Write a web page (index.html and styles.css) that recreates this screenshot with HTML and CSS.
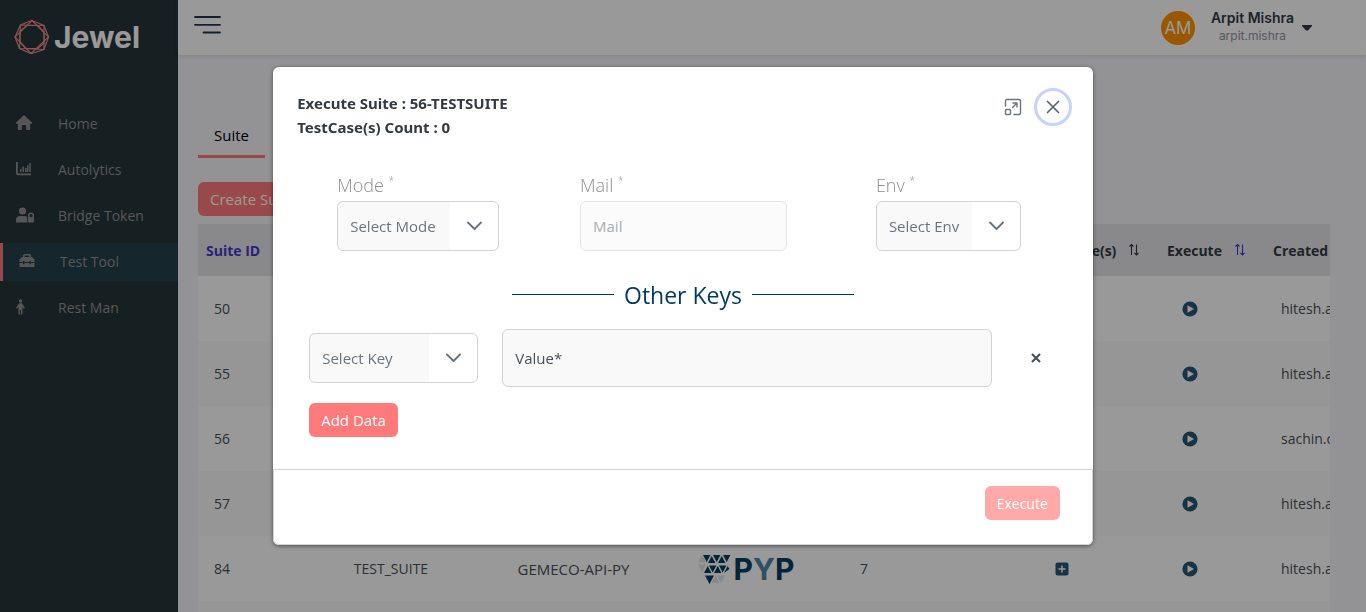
FILE: index.html
```html
<!DOCTYPE html>
<html lang="en">
<head>
<meta charset="utf-8">
<meta name="viewport" content="width=device-width, initial-scale=1">
<title>Jewel - Test Tool</title>
<link rel="stylesheet" href="styles.css">
</head>
<body>
<svg class="defs" aria-hidden="true">
  <symbol id="play" viewBox="0 0 16 16"><circle cx="8" cy="8" r="7.6" fill="#285676"/><path d="M5.500 4.200v7.600L12 8z" fill="#fff"/></symbol>
  <symbol id="chevron" viewBox="0 0 16 16"><path d="M1 4.500 7.500 11l6.500-6.500" fill="none" stroke="#667080" stroke-width="1.800" stroke-linecap="round" stroke-linejoin="round"/></symbol>
  <symbol id="sort" viewBox="0 0 12 14"><path d="M3.500 12V1.500M1.500 3.500l2-2 2 2M8.500 1.500V12M6.500 10l2 2 2-2" fill="none" stroke="currentColor" stroke-width="1.100"/></symbol>
</svg>
<div class="app">
  <aside class="sidebar">
    <a class="brand" href="#">
      <svg class="gem" viewBox="0 0 36 36" fill="none" stroke="#e88b8b" stroke-width="1.200"><path d="M18 1.500 30 6.500 34.500 18 30 30.500 17 34.500 5.500 29.500 1 18 6.500 6z"/><path d="M18 1.500 34.500 18 17 34.500 1 18z"/><path d="M30 6.500V30.500L5.500 29.500 6.500 6z"/><path d="M13 6.500H24L30 13V24L24 29.500H12L6 23V12z"/></svg>
      <span>Jewel</span>
    </a>
    <nav class="nav">
      <a class="nav-item" href="#"><svg viewBox="0 0 18 16"><path d="M8 0 0 7.500v1.300h1.800V14q0 1 1 1h3v-4q0-1 1-1h2.400q1 0 1 1V15h3q1 0 1-1V8.800H16V7.500z"/></svg>Home</a>
      <a class="nav-item" href="#"><svg viewBox="0 0 18 16"><path d="M0 1h1.800v10.500q0 1 1 1H15v1.800H2Q0 14.300 0 12zM4 8h1.500v3H4zM6.500 5.500H8V11H6.500zM9 7h1.500v4H9zM11 4.500h1.500V11H11zM13.300 2h1.500v9h-1.500z"/></svg>Autolytics</a>
      <a class="nav-item" href="#"><svg viewBox="0 0 18 16"><circle cx="6.500" cy="4" r="3.600"/><path d="M0 15.500V13Q0 9 4 9H8.500Q10.500 9 11 10V15.500z"/><path d="M12 10V8.500a3 3 0 0 1 6 0V10h.2v5.500H11.800V10zm1.500 0h3V8.500a1.500 1.500 0 0 0-3 0z" fill-rule="evenodd"/></svg>Bridge Token</a>
      <a class="nav-item active" href="#" aria-current="page"><svg viewBox="0 0 18 16"><path d="M4 4V2.500Q4 1 5.500 1h5Q12 1 12 2.500V4h1l2.500 2.500V9H12V8h-1.500v1h-5V8H4v1H.5V6.500L3 4zm1.500 0h5V2.500h-5zM.5 10H4v1.200h1.500V10h5v1.200H12V10h3.500v4H.5z" fill-rule="evenodd"/></svg>Test Tool</a>
      <a class="nav-item" href="#"><svg viewBox="0 0 18 16"><circle cx="4.500" cy="2" r="1.700"/><path d="M3 4.200H6L9 9l-1.400.8L6.500 8V15.500H5V11H4v4.500H2.500V8L1.400 9.800 0 9z"/></svg>Rest Man</a>
    </nav>
  </aside>
  <div class="page">
    <header class="topbar">
      <button class="menu" aria-label="Toggle menu"><svg viewBox="0 0 28 20" stroke="#27324a" stroke-width="1.800" stroke-linecap="round"><path d="M2 2H27M2 9.800H27M10.500 17.500H27"/></svg></button>
      <button class="user"><span class="avatar">AM</span><span class="who"><strong>Arpit Mishra</strong><span>arpit.mishra</span></span><svg viewBox="0 0 10 6"><path d="M0 0H10V1L6 5.500H4L0 1z" fill="#343a46"/></svg></button>
    </header>
    <main class="content">
      <div class="tabs"><a class="tab" href="#">Suite</a></div>
      <button class="btn">Create Suite</button>
      <div class="table-wrap">
        <table>
          <colgroup><col class="c-id"><col class="c-name"><col class="c-project"><col class="c-logo"><col class="c-count"><col class="c-gap"><col class="c-case"><col class="c-run"><col class="c-by"></colgroup>
          <thead><tr><th class="id">Suite ID</th><th></th><th></th><th></th><th></th><th></th><th class="case">TestCase(s) <svg class="sort"><use href="#sort"/></svg></th><th class="run">Execute <svg class="sort blue"><use href="#sort"/></svg></th><th class="by">Created By</th></tr></thead>
          <tbody>
            <tr><td class="id">50</td><td></td><td></td><td></td><td></td><td></td><td></td><td class="run"><svg class="play"><use href="#play"/></svg></td><td class="by">hitesh.a</td></tr>
            <tr><td class="id">55</td><td></td><td></td><td></td><td></td><td></td><td></td><td class="run"><svg class="play"><use href="#play"/></svg></td><td class="by">hitesh.a</td></tr>
            <tr><td class="id">56</td><td></td><td></td><td></td><td></td><td></td><td></td><td class="run"><svg class="play"><use href="#play"/></svg></td><td class="by">sachin.c</td></tr>
            <tr><td class="id">57</td><td></td><td></td><td></td><td></td><td></td><td></td><td class="run"><svg class="play"><use href="#play"/></svg></td><td class="by">hitesh.a</td></tr>
            <tr><td class="id">84</td><td>TEST_SUITE</td><td class="project">GEMECO-API-PY</td>
              <td><span class="pyp"><svg viewBox="0 0 36 30"><g fill="#e4e4e6"><path d="M0 8.500 4 1 8 8.500zM0 10.500h8l-4 7.500zM13.500 29l4-7.500 4 7.500zM19 21.500h8l-4 7.500z"/></g><g fill="#063e5c"><path d="M6 1h7.400l-3.700 7zM11 9l3.700-7 3.700 7zM16 1h7.400l-3.700 7zM21 9l3.700-7 3.700 7zM26 1h7.400l-3.700 7z" transform="translate(-1)"/><path d="M6 19l3.700-7 3.700 7zM11 11.500h7.400l-3.700 7zM16 19l3.700-7 3.700 7zM21 11.500h7.400l-3.700 7zM26 19l3.700-7 1.700 3zM7 21.500h9L11.500 30z"/></g></svg><span>P<i>Y</i>P</span></span></td>
              <td>7</td><td></td><td class="case"><svg class="plus" viewBox="0 0 14 14"><rect x=".5" y=".5" width="13" height="13" rx="2" fill="#285676"/><path d="M7 3.500v7M3.500 7h7" stroke="#fff" stroke-width="1.500"/></svg></td><td class="run"><svg class="play"><use href="#play"/></svg></td><td class="by">hitesh.a</td></tr>
            <tr><td class="id"></td><td></td><td></td><td></td><td></td><td></td><td></td><td></td><td></td></tr>
          </tbody>
        </table>
      </div>
    </main>
  </div>
</div>

<div class="overlay">
  <section class="modal" role="dialog" aria-modal="true" aria-labelledby="title">
    <header class="modal-head">
      <h1 id="title">Execute Suite : 56-TESTSUITE<br>TestCase(s) Count : 0</h1>
      <div class="actions">
        <button class="icon-btn" aria-label="Maximize"><svg viewBox="0 0 18 18" fill="none" stroke="#6c757d" stroke-width="1.400" stroke-linecap="round" stroke-linejoin="round"><path d="M1.500 8V3q0-1.500 1.500-1.500H15q1.500 0 1.500 1.500V15q0 1.500-1.500 1.500H10"/><rect x="1.500" y="11.500" width="5" height="5" rx="1"/><path d="M8.500 9.500l4-4M9 5h4v4"/></svg></button>
        <button class="icon-btn close" aria-label="Close"><svg viewBox="0 0 18 18"><path d="M3.500 3.500l11 11M14.500 3.500l-11 11" stroke="#59636e" stroke-width="1.700" stroke-linecap="round"/></svg></button>
      </div>
    </header>
    <form>
      <div class="modal-body">
        <div class="fields">
          <div class="field"><label for="mode">Mode <sup>*</sup></label><div class="select mode"><select id="mode"><option>Select Mode</option></select><svg><use href="#chevron"/></svg></div></div>
          <div class="field"><label for="mail">Mail <sup>*</sup></label><input class="mail" id="mail" type="email" placeholder="Mail" disabled></div>
          <div class="field"><label for="env">Env <sup>*</sup></label><div class="select"><select id="env"><option>Select Env</option></select><svg><use href="#chevron"/></svg></div></div>
        </div>
        <h2>Other Keys</h2>
        <div class="key-row">
          <div class="select"><select aria-label="Key"><option>Select Key</option></select><svg><use href="#chevron"/></svg></div>
          <input class="value" type="text" placeholder="Value*" aria-label="Value">
          <button type="button" class="remove" aria-label="Remove key"><svg viewBox="0 0 12 12"><path d="M2 2l8 8M10 2l-8 8" stroke="#495057" stroke-width="2.200"/></svg></button>
        </div>
        <button type="button" class="btn add">Add Data</button>
      </div>
      <footer><button class="btn" disabled>Execute</button></footer>
    </form>
  </section>
</div>
</body>
</html>
```
FILE: styles.css
```css
* { box-sizing: border-box; }
body {
  margin: 0;
  height: 100vh;
  overflow: hidden;
  background: #f5f4f9;
  color: #495057;
  font-family: "Open Sans", "Noto Sans", sans-serif;
  font-size: 15px;
}
button, input, select { font: inherit; color: inherit; }
button { border: 0; background: none; padding: 0; cursor: pointer; }
a { color: inherit; text-decoration: none; }
svg { display: block; flex: none; }
.defs { position: absolute; width: 0; height: 0; }

.app { display: flex; height: 100vh; overflow: hidden; }
.sidebar { flex: none; width: 178px; background: #263439; }
.brand {
  display: flex;
  align-items: center;
  gap: 4px;
  height: 74px;
  padding-left: 14px;
  color: #fff;
  font: 700 30px Inter, sans-serif;
}
.gem { width: 36px; height: 36px; }
.nav { display: flex; flex-direction: column; gap: 8px; margin-top: 31px; }
.nav-item {
  display: flex;
  align-items: center;
  gap: 24px;
  height: 38px;
  padding: 0 0 2px 16px;
  color: #8f9395;
  font-size: 14px;
}
.nav-item svg { width: 18px; height: 16px; fill: #8f8f8f; }
.nav-item.active { border-left: 3px solid #ff7b7b; background: #25404b; gap: 23px; }

.page { flex: 1; min-width: 0; }
.topbar {
  display: flex;
  align-items: center;
  justify-content: space-between;
  height: 55px;
  padding: 0 54px 0 15px;
  background: #fff;
  box-shadow: 0 1px 4px rgba(40, 40, 80, .15);
}
.menu svg { width: 28px; height: 20px; margin-bottom: 6px; }
.user { display: flex; align-items: center; gap: 8px; font-family: Inter, sans-serif; }
.avatar {
  width: 34px;
  height: 34px;
  margin-right: 8px;
  border-radius: 50%;
  background: #ff9100;
  color: #fff;
  font-size: 17px;
  line-height: 34px;
}
.who { display: grid; padding-bottom: 1px; font-size: 12px; line-height: 18px; color: #9391a0; }
.who strong { font-size: 14px; font-weight: 600; color: #343a46; }
.user svg { width: 10px; height: 6px; }

.content { padding: 60px 36px 0 20px; }
.tabs { display: flex; margin-bottom: 24px; }
.tab {
  padding: 10px 16px;
  border-bottom: 3px solid #ff7b7b;
  color: #000;
  font-size: 15px;
  line-height: 20px;
}
.btn {
  height: 34px;
  padding: 0 12px;
  border-radius: 6px;
  background: #ff7b7b;
  color: #fff;
  font-size: 15px;
}
.btn:disabled { opacity: .65; font-size: 14px; }

.table-wrap { overflow: hidden; margin-top: 8px; }
table { width: 1259px; table-layout: fixed; border-collapse: collapse; text-align: center; }
.c-id { width: 111px; }
.c-name { width: 164px; }
.c-project { width: 201px; }
.c-logo { width: 144px; }
.c-count { width: 92px; }
.c-gap { width: 74px; }
.c-case { width: 167px; }
.c-run { width: 106px; }
.c-by { width: 200px; }
th { height: 52px; padding: 0; background: #e5e5e8; color: #343a40; font-size: 14px; font-weight: 700; }
td { height: 65px; padding: 0; font-size: 14px; }
td.project { font-size: 15px; }
tbody tr { background: #fff; }
tbody tr:nth-child(even) { background: #fbfbfb; }
th.id { padding-left: 8px; text-align: left; color: #4338ca; }
td.id { padding-left: 16px; text-align: left; }
th.case { padding-right: 11px; text-align: right; }
td.case { padding-right: 11px; }
th.run { padding-left: 16px; text-align: left; }
td.run { padding-right: 28px; }
th.by { padding-left: 16px; text-align: left; }
td.by { padding-left: 24px; text-align: left; }
td svg { margin: 0 auto; }
.sort { display: inline-block; width: 12px; height: 14px; margin-left: 8px; vertical-align: -1px; }
.sort.blue { color: #4338ca; }
.play { width: 16px; height: 16px; }
.plus { width: 14px; height: 14px; }
.pyp { display: flex; align-items: center; justify-content: center; color: #063e5c; font: 700 30px Inter, sans-serif; }
.pyp svg { width: 36px; height: 30px; margin: 0; }
.pyp i { font-style: normal; color: #4d85a5; }

.overlay {
  position: fixed;
  inset: 0;
  display: grid;
  place-items: center;
  background: rgba(0, 0, 0, .4);
}
.modal {
  width: 60%;
  min-width: 760px;
  border-radius: 6px;
  background: #fff;
  box-shadow: 0 1px 4px rgba(0, 0, 0, .5);
}
.modal-head { display: flex; justify-content: space-between; padding: 24px 21px 0 24px; }
h1 { margin: 0; color: #343a40; font-family: "Noto Sans", sans-serif; font-size: 15px; font-weight: 700; line-height: 24px; }
.actions { display: flex; gap: 2px; height: 32px; }
.icon-btn { display: grid; place-items: center; width: 38px; height: 32px; }
.icon-btn svg { width: 18px; height: 18px; }
.close { height: 38px; margin-top: -3px; border: 3px solid #c7d2fe; border-radius: 50%; }
.modal-body { padding: 34px 36px 32px; }
.fields { display: grid; grid-template-columns: 243fr 296fr 145fr; padding: 0 36px 0 28px; }
label { display: block; height: 28px; color: #8f8f8f; font-size: 18px; font-weight: 300; line-height: 24px; }
sup { font-size: 10px; line-height: 0; vertical-align: 8px; }
.select { position: relative; }
.select.mode { width: 162px; }
.select svg { position: absolute; top: 17px; right: 16px; width: 16px; height: 16px; pointer-events: none; }
select, input {
  display: block;
  width: 100%;
  height: 50px;
  padding: 0 12px;
  border: 1px solid #ced4da;
  border-radius: 6px;
  outline: 0;
  background: #f9f9f9;
  color: #6c757d;
  font-size: 15px;
}
select { appearance: none; background: linear-gradient(to left, #fff 48px, #f9f9f9 48px); }
input::placeholder { color: #6c757d; opacity: 1; }
.mail { width: 207px; opacity: .6; }
h2 {
  display: flex;
  align-items: center;
  justify-content: center;
  gap: 10px;
  margin: 28px 0 18px;
  color: #003a5d;
  font-size: 23px;
  font-weight: 400;
  line-height: 32px;
}
h2::before, h2::after { content: ""; width: 102px; height: 1px; margin-bottom: 2px; background: #003a5d; }
.key-row { display: grid; grid-template-columns: 169px 1fr 41px; gap: 24px; align-items: center; }
.value { height: 58px; }
.value::placeholder { color: #495057; }
.remove { display: grid; place-items: center; height: 32px; }
.remove svg { width: 12px; height: 12px; }
.add { display: block; margin-top: 16px; }
footer {
  display: flex;
  justify-content: flex-end;
  padding: 16px 32px 24px;
  border: 1px solid #ced4da;
  border-radius: 0 0 6px 6px;
}
```
